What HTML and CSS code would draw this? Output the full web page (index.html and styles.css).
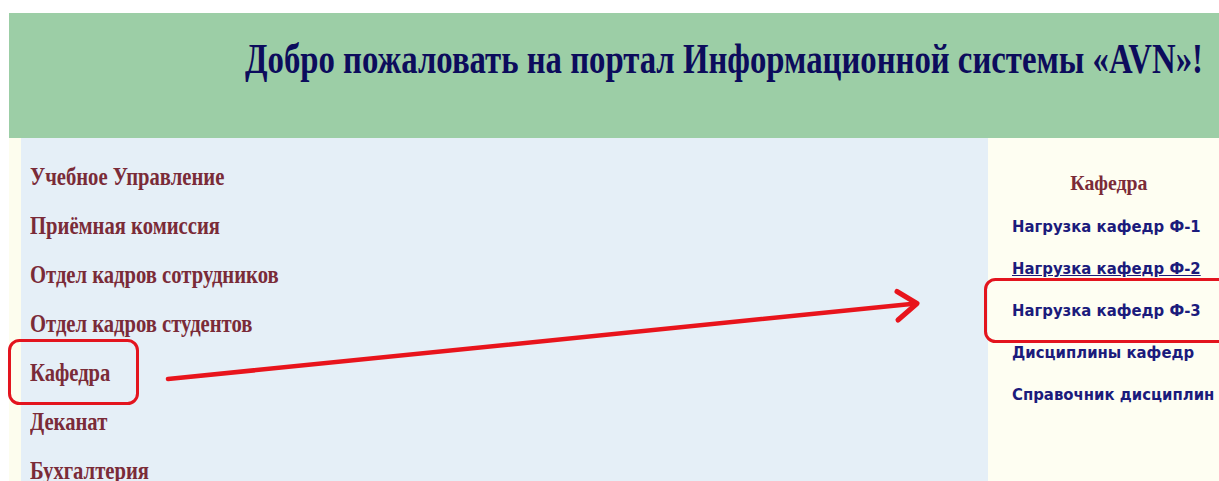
FILE: index.html
```html
<!DOCTYPE html>
<html lang="ru">
<head>
<meta charset="utf-8">
<title>AVN — портал</title>
<link rel="stylesheet" href="styles.css">
</head>
<body>
<div class="page">
  <header class="top">
    <h1 class="title"><span class="narrow">Добро пожаловать на портал Информационной системы «AVN»!</span></h1>
  </header>
  <div class="main">
    <div class="edge"></div>
    <nav class="menu">
      <a class="menu-item" href="#"><span class="narrow">Учебное Управление</span></a>
      <a class="menu-item" href="#"><span class="narrow">Приёмная комиссия</span></a>
      <a class="menu-item" href="#"><span class="narrow">Отдел кадров сотрудников</span></a>
      <a class="menu-item" href="#"><span class="narrow">Отдел кадров студентов</span></a>
      <a class="menu-item" href="#"><span class="narrow">Кафедра</span></a>
      <a class="menu-item" href="#"><span class="narrow">Деканат</span></a>
      <a class="menu-item" href="#"><span class="narrow">Бухгалтерия</span></a>
    </nav>
    <aside class="side">
      <div class="side-head"><span class="narrow">Кафедра</span></div>
      <a class="side-link" href="#"><span class="narrow">Нагрузка кафедр Ф-1</span></a>
      <a class="side-link hover" href="#"><span class="narrow">Нагрузка кафедр Ф-2</span></a>
      <a class="side-link" href="#"><span class="narrow">Нагрузка кафедр Ф-3</span></a>
      <a class="side-link" href="#"><span class="narrow">Дисциплины кафедр</span></a>
      <a class="side-link" href="#"><span class="narrow">Справочник дисциплин</span></a>
    </aside>
  </div>
  <svg class="marks" width="1219" height="481" viewBox="0 0 1219 481">
    <rect x="9.5" y="340.5" width="128" height="63" rx="10" ry="10" fill="none" stroke="#e3141e" stroke-width="3"/>
    <rect x="985.5" y="279.5" width="260" height="62" rx="10" ry="10" fill="none" stroke="#e3141e" stroke-width="3"/>
    <line x1="168" y1="379" x2="916" y2="303.5" stroke="#e8141c" stroke-width="4.5" stroke-linecap="round"/>
    <polyline points="897,291.5 917,303.5 898,320" fill="none" stroke="#e8141c" stroke-width="5" stroke-linecap="round" stroke-linejoin="round"/>
  </svg>
</div>
</body>
</html>
```

FILE: styles.css
```css
html, body {
  margin: 0;
  padding: 0;
  background: #ffffff;
  overflow: hidden;
}

.page {
  position: relative;
  width: 1240px;
  height: 481px;
  padding: 13px 0 0 9px;
  box-sizing: border-box;
  font-family: "Liberation Serif", "Times New Roman", serif;
}

.narrow {
  display: inline-block;
  white-space: nowrap;
  transform-origin: left center;
}

/* header band */
.top {
  background: #9ccea6;
  height: 125px;
  padding-left: 236px;
  box-sizing: border-box;
}

.title {
  margin: 0;
  padding-top: 22px;
  font-size: 42px;
  line-height: 48px;
  font-weight: bold;
  color: #0c0c5c;
}

.title .narrow {
  transform: scaleX(0.78);
}

/* columns */
.main {
  display: flex;
  height: 343px;
}

.edge {
  width: 12px;
  background: #fdfdee;
}

.menu {
  width: 967px;
  background: #e5eff7;
  display: flex;
  flex-direction: column;
  padding: 14px 0 0 9px;
  box-sizing: border-box;
}

.menu-item {
  font-size: 25px;
  line-height: 49px;
  height: 49px;
  font-weight: bold;
  color: #7a2b38;
  text-decoration: none;
}

.menu-item .narrow {
  transform: scaleX(0.825);
}

.side {
  flex: 1;
  background: #fefef2;
  display: flex;
  flex-direction: column;
  padding: 30px 0 0 24px;
  box-sizing: border-box;
}

.side-head {
  align-self: center;
  margin-left: -34px;
  font-size: 22px;
  line-height: 30px;
  font-weight: bold;
  color: #7a2b38;
  margin-bottom: 8px;
}

.side-head .narrow {
  transform: scaleX(0.9);
  transform-origin: center;
}

.side-link {
  font-family: "DejaVu Sans", Verdana, sans-serif;
  font-size: 16px;
  line-height: 42px;
  height: 42px;
  font-weight: bold;
  color: #1b1b7c;
  text-decoration: none;
}

.side-link .narrow {
  transform: scaleX(0.93);
}

.side-link.hover .narrow {
  text-decoration: underline;
}

/* annotation layer */
.marks {
  position: absolute;
  top: 0;
  left: 0;
  pointer-events: none;
}
```
